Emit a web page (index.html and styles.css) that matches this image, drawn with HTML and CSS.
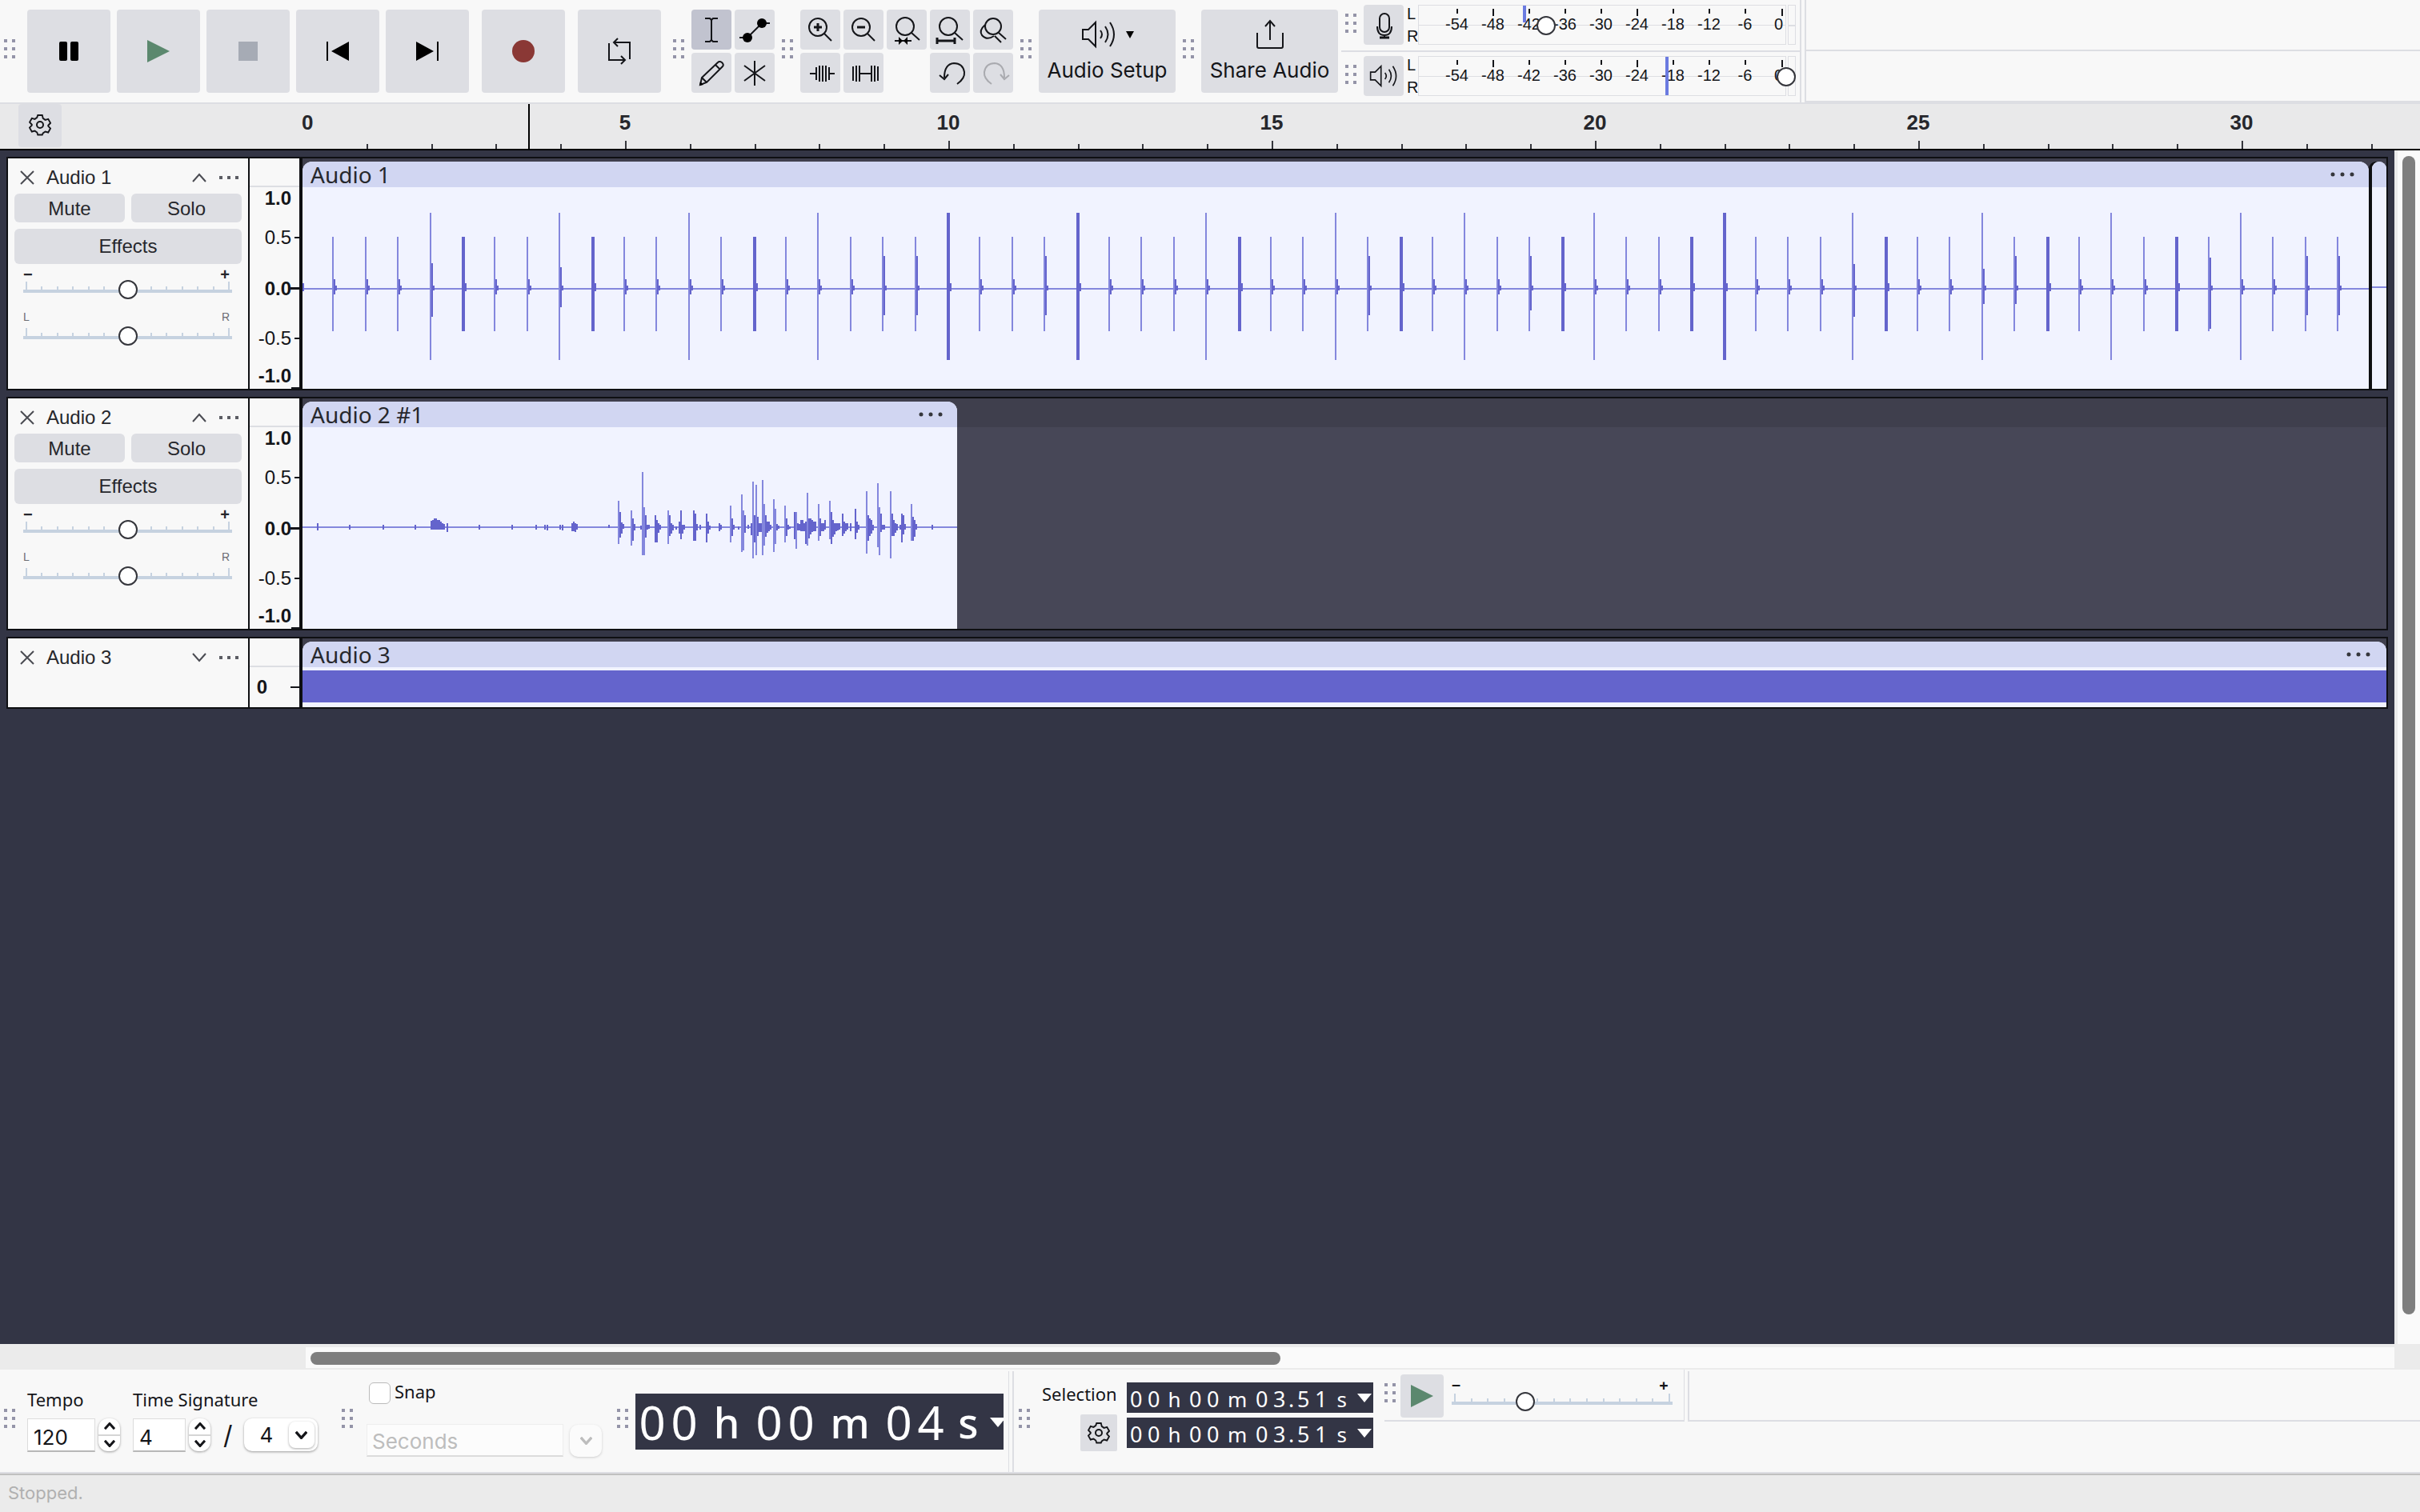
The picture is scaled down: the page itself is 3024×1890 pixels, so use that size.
FILE: index.html
```
<!doctype html>
<html lang="en">
<head>
<meta charset="utf-8">
<meta name="viewport" content="width=device-width,initial-scale=1">
<title>Audio editor</title>
<link rel="stylesheet" href="styles.css">
</head>
<body>

<!-- shared icons -->
<svg class="defs" width="0" height="0" aria-hidden="true">
	<symbol id="grip" viewBox="0 0 14 24"><path d="M0 0h4v4H0zM10 0h4v4h-4zM0 10h4v4H0zM10 10h4v4h-4zM0 20h4v4H0zM10 20h4v4h-4z" fill="#9494a8"/></symbol>
	<symbol id="gear" viewBox="0 0 28 28"><path d="M11 2h6l1 4 3 2 4-1 3 5-3 3v1l3 3-3 5-4-1-3 2-1 2h-6l-1-3-3-2-4 1-3-5 3-3v-1l-3-3 3-5 4 1 3-2z" transform="translate(1 0) scale(.93 .98)"/><circle cx="14" cy="14" r="4"/></symbol>
	<symbol id="speaker" viewBox="0 0 44 36"><path d="M2 12h7L18 3v30L9 24H2zM24 13q4 5 0 10M30 8q7 10 0 20M36 3q10 15 0 30"/></symbol>
	<symbol id="close" viewBox="0 0 18 18"><path d="M1 1l16 16M17 1L1 17"/></symbol>
	<symbol id="up" viewBox="0 0 18 12"><path d="M1 11l8-9 8 9"/></symbol>
	<symbol id="down" viewBox="0 0 18 12"><path d="M1 1l8 9 8-9"/></symbol>
	<symbol id="dots" viewBox="0 0 26 6"><path d="M1 1h4v4H1zM11 1h4v4h-4zM21 1h4v4h-4z"/></symbol>
	<symbol id="clipdots" viewBox="0 0 30 6"><circle cx="3" cy="3" r="2.5"/><circle cx="15" cy="3" r="2.5"/><circle cx="27" cy="3" r="2.5"/></symbol>
</svg>

<header class="topbar">
	<svg class="grip"><use href="#grip"/></svg>
	<div class="transport">
		<button class="btn" aria-label="Pause"><svg viewBox="0 0 40 40"><rect x="8" y="8" width="10" height="24" rx="2"/><rect x="22" y="8" width="10" height="24" rx="2"/></svg></button>
		<button class="btn" aria-label="Play"><svg class="green" viewBox="0 0 40 40"><path d="M6 6l28 14L6 34z"/></svg></button>
		<button class="btn" aria-label="Stop"><svg class="gray" viewBox="0 0 40 40"><path d="M8 8h24v24H8z"/></svg></button>
		<button class="btn" aria-label="Skip to start"><svg viewBox="0 0 40 40"><path d="M6 8h2v24H6zM34 8v24L12 20z"/></svg></button>
		<button class="btn" aria-label="Skip to end"><svg viewBox="0 0 40 40"><path d="M6 8v24l22-12zM32 8h2v24h-2z"/></svg></button>
		<button class="btn spaced" aria-label="Record"><svg class="red" viewBox="0 0 40 40"><circle cx="20" cy="20" r="14"/></svg></button>
		<button class="btn spaced" aria-label="Loop"><svg class="line" viewBox="0 0 40 40"><path d="M7 10v21h20M22 26l5 5-5 5M33 30V9H13M18 4l-5 5 5 5"/></svg></button>
	</div>

	<svg class="grip"><use href="#grip"/></svg>
	<div class="tools tools2">
		<button class="btn active" aria-label="Selection tool"><svg class="line" viewBox="0 0 50 50"><path d="M17 11h6l2 2 2-2h6M17 40h6l2-2 2 2h6M25 12v27"/></svg></button>
		<button class="btn" aria-label="Envelope tool"><svg class="line" viewBox="0 0 50 50"><path d="M6 35h10l18-18h10"/><g class="solid"><circle cx="16" cy="35" r="6"/><circle cx="34" cy="17" r="6"/></g></svg></button>
		<button class="btn" aria-label="Draw tool"><svg class="line" viewBox="0 0 50 50"><path d="M11 40l2-9 20-19q2-2 5 0 3 3 1 5L19 37zM13 31l6 6M30 15l6 6"/><path class="solid" d="M10 41l1-5 4 4z"/></svg></button>
		<button class="btn" aria-label="Multi-tool"><svg class="line" viewBox="0 0 50 50"><path d="M25 10v31M12 16l26 19M38 16L12 35"/></svg></button>
	</div>

	<svg class="grip"><use href="#grip"/></svg>
	<div class="tools tools5">
		<button class="btn" aria-label="Zoom in"><svg class="line" viewBox="0 0 50 50"><circle cx="22" cy="22" r="11"/><path d="M30 30l9 9"/><path class="bold" d="M17 22h10M22 17v10"/></svg></button>
		<button class="btn" aria-label="Zoom out"><svg class="line" viewBox="0 0 50 50"><circle cx="22" cy="22" r="11"/><path d="M30 30l9 9"/><path class="bold" d="M17 22h10"/></svg></button>
		<button class="btn" aria-label="Zoom to selection"><svg class="line" viewBox="0 0 50 50"><circle cx="23" cy="21" r="11"/><path d="M31 29l10 9M10 39h21"/><path class="solid" d="M15 34l5 5-5 5zM26 34l-5 5 5 5z"/></svg></button>
		<button class="btn" aria-label="Fit project"><svg class="line" viewBox="0 0 50 50"><circle cx="23" cy="21" r="11"/><path d="M31 29l10 9"/><path class="bold" d="M9 39h22M9 35v8M31 35v8"/></svg></button>
		<button class="btn" aria-label="Zoom toggle"><svg class="line" viewBox="0 0 50 50"><circle cx="25" cy="21" r="10"/><path d="M32 29l9 8M15 19q-8 7-4 13 6 7 15 1M27 33l8 8"/></svg></button>
		<button class="btn" aria-label="Trim"><svg class="line" viewBox="0 0 50 50"><path d="M12 26h9M35 26h8M20 18v16M24 16v20M28 16v20M32 16v20M36 18v16"/></svg></button>
		<button class="btn" aria-label="Silence"><svg class="line" viewBox="0 0 50 50"><path d="M12 17v18M16 16v20M20 16v20M20 26h15M35 16v20M39 16v20M43 17v18"/></svg></button>
		<span></span>
		<button class="btn" aria-label="Undo"><svg class="line" viewBox="0 0 50 50"><path d="M34 39q10-7 9-15-2-11-13-11-12 1-12 18M12 28l6 5 5-6"/></svg></button>
		<button class="btn" aria-label="Redo" disabled><svg class="line" viewBox="0 0 50 50"><path d="M23 39q-10-7-9-15 2-11 13-11 12 1 12 18M34 27l5 6 6-5"/></svg></button>
	</div>

	<svg class="grip"><use href="#grip"/></svg>
	<button class="btn big">
		<span class="bigicon"><svg class="line" width="44" height="36"><use href="#speaker"/></svg><svg width="10" height="9"><path d="M0 0h10L5 9z"/></svg></span>
		Audio Setup
	</button>

	<svg class="grip"><use href="#grip"/></svg>
	<button class="btn big">
		<span class="bigicon"><svg class="line" width="36" height="38" viewBox="0 0 36 38"><path d="M18 26V3M12 9l6-7 6 7M2 17v17q0 2 2 2h28q2 0 2-2V17"/></svg></span>
		Share Audio
	</button>

	<div class="meters">
		<div class="meterrow">
			<svg class="grip"><use href="#grip"/></svg>
			<button class="btn" aria-label="Record meter"><svg class="line" viewBox="0 0 50 50"><rect x="20" y="11" width="12" height="23" rx="6"/><path d="M17 27q0 11 9 11t9-11M26 38v3"/><path class="bold" d="M20 41h12"/></svg></button>
			<div class="lr"><span>L</span><span>R</span></div>
			<div class="meter">
				<div class="db"><span>-54</span><span class="long">-48</span><span>-42</span><span>-36</span><span>-30</span><span class="long">-24</span><span>-18</span><span>-12</span><span>-6</span><span class="long last">0</span></div>
				<i class="peak half" style="left:131px"></i>
				<div class="clipbox"></div>
				<input class="knob" type="range" aria-label="Recording level" value="33">
			</div>
		</div>
		<div class="meterrow">
			<svg class="grip"><use href="#grip"/></svg>
			<button class="btn" aria-label="Playback meter"><svg class="line" width="36" height="30"><use href="#speaker"/></svg></button>
			<div class="lr"><span>L</span><span>R</span></div>
			<div class="meter">
				<div class="db"><span>-54</span><span class="long">-48</span><span>-42</span><span>-36</span><span>-30</span><span class="long">-24</span><span>-18</span><span>-12</span><span>-6</span><span class="long last">0</span></div>
				<i class="peak" style="left:309px"></i>
				<div class="clipbox"></div>
				<input class="knob" type="range" aria-label="Playback level" value="100">
			</div>
		</div>
	</div>
	<div class="filler"><div></div><div></div></div>
</header>

<div class="timeline">
	<button class="btn gearbtn" aria-label="Timeline options"><svg class="line" width="28" height="28"><use href="#gear"/></svg></button>
	<div class="scale">
		<span>0</span><span>5</span><span>10</span><span>15</span><span>20</span><span>25</span><span>30</span>
		<i class="playhead" style="left:283px"></i>
	</div>
</div>

<main class="workspace">
	<div class="tracks">

		<section class="track">
			<div class="panel">
				<div class="head"><button aria-label="Close track"><svg width="18" height="18"><use href="#close"/></svg></button><b>Audio 1</b><button aria-label="Collapse"><svg width="18" height="12"><use href="#up"/></svg></button><button aria-label="Track menu"><svg class="fill" width="26" height="6"><use href="#dots"/></svg></button></div>
				<div class="pair"><button class="btn">Mute</button><button class="btn">Solo</button></div>
				<button class="btn fx">Effects</button>
				<div class="ends"><span>&minus;</span><span>+</span></div>
				<input class="slider" type="range" aria-label="Gain 1">
				<div class="ends pan"><span>L</span><span>R</span></div>
				<input class="slider" type="range" aria-label="Pan 1">
			</div>
			<div class="vruler"><span class="end">1.0</span><span class="mid">0.5</span><span class="zero">0.0</span><span class="mid">-0.5</span><span class="end low">-1.0</span></div>
			<div class="lane">
				<div class="clip" style="width:2582px"><div class="title">Audio 1<svg class="fill" width="30" height="6"><use href="#clipdots"/></svg></div><svg class="wave" id="wave1"></svg></div>
				<div class="clip rest"><div class="title"></div><svg class="wave"><path class="peaks" d="M0 125h400"/></svg></div>
			</div>
		</section>

		<section class="track">
			<div class="panel">
				<div class="head"><button aria-label="Close track"><svg width="18" height="18"><use href="#close"/></svg></button><b>Audio 2</b><button aria-label="Collapse"><svg width="18" height="12"><use href="#up"/></svg></button><button aria-label="Track menu"><svg class="fill" width="26" height="6"><use href="#dots"/></svg></button></div>
				<div class="pair"><button class="btn">Mute</button><button class="btn">Solo</button></div>
				<button class="btn fx">Effects</button>
				<div class="ends"><span>&minus;</span><span>+</span></div>
				<input class="slider" type="range" aria-label="Gain 2">
				<div class="ends pan"><span>L</span><span>R</span></div>
				<input class="slider" type="range" aria-label="Pan 2">
			</div>
			<div class="vruler"><span class="end">1.0</span><span class="mid">0.5</span><span class="zero">0.0</span><span class="mid">-0.5</span><span class="end low">-1.0</span></div>
			<div class="lane">
				<div class="clip" style="width:818px"><div class="title">Audio 2 #1<svg class="fill" width="30" height="6"><use href="#clipdots"/></svg></div><svg class="wave" id="wave2"></svg></div>
			</div>
		</section>

		<section class="track small">
			<div class="panel">
				<div class="head"><button aria-label="Close track"><svg width="18" height="18"><use href="#close"/></svg></button><b>Audio 3</b><button aria-label="Expand"><svg width="18" height="12"><use href="#down"/></svg></button><button aria-label="Track menu"><svg class="fill" width="26" height="6"><use href="#dots"/></svg></button></div>
			</div>
			<div class="vruler"><span class="only">0</span></div>
			<div class="lane">
				<div class="clip rest"><div class="title">Audio 3<svg class="fill" width="30" height="6"><use href="#clipdots"/></svg></div><div class="block"></div></div>
			</div>
		</section>

	</div>
	<div class="vscroll"><div></div></div>
</main>

<div class="hscroll"><div class="hbox"><div class="hbar"></div></div></div>

<footer class="bottombar">
	<svg class="grip"><use href="#grip"/></svg>
	<div class="field tempo">
		<label for="tempo">Tempo</label>
		<div class="row"><input id="tempo" class="text" value="120"><div class="spin"><button aria-label="Tempo up"><svg width="14" height="9"><use href="#up"/></svg></button><button aria-label="Tempo down"><svg width="14" height="9"><use href="#down"/></svg></button></div></div>
	</div>
	<div class="field sig">
		<label for="beats">Time Signature</label>
		<div class="row"><input id="beats" class="text" value="4"><div class="spin"><button aria-label="Beats up"><svg width="14" height="9"><use href="#up"/></svg></button><button aria-label="Beats down"><svg width="14" height="9"><use href="#down"/></svg></button></div><span class="slash">/</span><div class="choice"><select aria-label="Beat unit"><option>4</option></select><span class="arrow"><svg width="15" height="10"><use href="#down"/></svg></span></div></div>
	</div>

	<svg class="grip"><use href="#grip"/></svg>
	<div class="field snap">
		<label><input type="checkbox"><span>Snap</span></label>
		<div class="row"><select aria-label="Snap to" disabled><option>Seconds</option></select><span class="arrow"><svg width="15" height="10"><use href="#down"/></svg></span></div>
	</div>

	<svg class="grip"><use href="#grip"/></svg>
	<div class="bigtime"><span>0</span><span>0</span><em>h</em><span>0</span><span>0</span><em class="m">m</em><span>0</span><span>4</span><em class="s">s</em><button aria-label="Time format"><svg width="20" height="12"><path d="M0 0h20L10 12z"/></svg></button></div>

	<div class="divider"></div>
	<svg class="grip"><use href="#grip"/></svg>
	<div class="selection">
		<div class="sellabel"><span>Selection</span><button class="btn" aria-label="Selection options"><svg class="line" width="28" height="28"><use href="#gear"/></svg></button></div>
		<div class="times">
			<div class="time"><span>0</span><span>0</span><em>h</em><span>0</span><span>0</span><em class="m">m</em><span>0</span><span>3</span><i>.</i><span>5</span><span>1</span><em>s</em><button aria-label="Start format"><svg width="18" height="11"><path d="M0 0h18L9 11z"/></svg></button></div>
			<div class="time"><span>0</span><span>0</span><em>h</em><span>0</span><span>0</span><em class="m">m</em><span>0</span><span>3</span><i>.</i><span>5</span><span>1</span><em>s</em><button aria-label="End format"><svg width="18" height="11"><path d="M0 0h18L9 11z"/></svg></button></div>
		</div>
	</div>

	<div class="speed">
		<svg class="grip"><use href="#grip"/></svg>
		<button class="btn" aria-label="Play at speed"><svg class="green" viewBox="0 0 40 40"><path d="M6 6l28 14L6 34z"/></svg></button>
		<div class="speedbox"><div class="ends"><span>&minus;</span><span>+</span></div><input class="slider" type="range" value="32" aria-label="Playback speed"></div>
	</div>
	<div class="filler"><div></div></div>
</footer>

<div class="status">Stopped.</div>

<script>

	// each bar is [ x, up, down ] around the middle of the clip
	function draw( id, mid, width, light, dark ) {

		const path = list => list.map( b => 'M' + b[ 0 ] + ' ' + ( mid - b[ 1 ] ) + 'V' + ( mid + b[ 2 ] ) ).join( '' );

		document.getElementById( id ).innerHTML =
			'<path class="peaks" d="M0 ' + mid + 'h' + width + path( light ) + '"/><path class="body" d="' + path( dark ) + '"/>';

	}

	// click track: a beat every half second, accent every fourth
	const thick = [ 5, 9, 14, 20, 24, 29, 34, 39, 43, 44, 49, 54, 58 ];
	const tails = { 4: [ 32, 35 ], 8: [ 27, 23 ], 18: [ 41, 33 ], 19: [ 41, 33 ], 23: [ 41, 33 ], 33: [ 41, 33 ], 38: [ 41, 27 ],
		48: [ 31, 35 ], 52: [ 25, 19 ], 53: [ 41, 19 ], 59: [ 39, 50 ], 62: [ 41, 33 ], 63: [ 41, 33 ] };
	const light = [];
	const dark = [ [ 1, 7, 3 ] ];

	for ( let i = 1; i < 64; i++ ) {

		const x = Math.round( i * 40.4 - 2 );
		const accent = i % 4 === 0;
		const up = accent ? 95 : 65;
		const dn = accent ? 89 : 53;
		const tail = tails[ i ] || [ 12, 7 ];

		light.push( [ x, up, dn ] );

		if ( thick.includes( i ) ) {

			dark.push( [ x, up, dn ], [ x + 2, up, dn ], [ x + 4, 7, 3 ] );

		} else {

			dark.push( [ x + 2, tail[ 0 ], tail[ 1 ] ], [ x + 4, 4, 2 ] );

		}

	}

	draw( 'wave1', 127, 2582, light, dark );

	// recorded taps
	const taps = [ [ 19, 5, 4 ], [ 59, 3, 3 ], [ 101, 3, 3 ], [ 141, 3, 3 ],
		[ 161, 8, 3 ], [ 163, 9, 3 ], [ 165, 11, 3 ], [ 167, 11, 3 ], [ 169, 9, 3 ], [ 171, 9, 3 ], [ 173, 7, 3 ], [ 175, 5, 3 ], [ 177, 4, 3 ], [ 181, 5, 6 ],
		[ 221, 3, 3 ], [ 262, 3, 3 ], [ 292, 3, 3 ], [ 303, 3, 3 ], [ 306, 3, 4 ], [ 322, 3, 3 ], [ 325, 3, 4 ], [ 337, 5, 5 ], [ 339, 7, 5 ], [ 341, 5, 6 ], [ 343, 4, 3 ], [ 383, 3, 1 ],
		[ 395, 33, 21 ], [ 397, 19, 13 ], [ 399, 6, 8 ], [ 401, 4, 2 ], [ 411, 21, 23 ], [ 413, 11, 17 ], [ 415, 4, 4 ],
		[ 423, 2, 3 ], [ 425, 69, 35 ], [ 427, 25, 35 ], [ 429, 15, 13 ], [ 431, 3, 3 ], [ 433, 3, 2 ],
		[ 441, 15, 19 ], [ 443, 9, 19 ], [ 445, 5, 7 ], [ 447, 3, 3 ], [ 457, 21, 21 ], [ 459, 15, 11 ], [ 461, 5, 8 ], [ 463, 3, 4 ], [ 467, 1, 3 ],
		[ 471, 7, 8 ], [ 473, 21, 15 ], [ 475, 3, 8 ], [ 477, 3, 3 ], [ 489, 21, 17 ], [ 491, 17, 17 ], [ 493, 4, 4 ], [ 497, 3, 3 ],
		[ 505, 17, 19 ], [ 507, 7, 8 ], [ 509, 2, 3 ], [ 521, 5, 5 ], [ 523, 3, 3 ], [ 535, 27, 19 ], [ 537, 11, 11 ], [ 539, 3, 3 ], [ 545, 1, 3 ],
		[ 549, 41, 31 ], [ 551, 21, 29 ], [ 553, 15, 7 ], [ 557, 3, 2 ], [ 561, 5, 10 ], [ 563, 57, 39 ], [ 565, 15, 19 ], [ 567, 53, 35 ], [ 569, 13, 11 ],
		[ 571, 5, 6 ], [ 573, 5, 6 ], [ 575, 59, 35 ], [ 577, 29, 23 ], [ 579, 15, 12 ], [ 581, 7, 7 ], [ 583, 7, 5 ], [ 585, 3, 3 ],
		[ 589, 35, 31 ], [ 591, 23, 21 ], [ 593, 4, 4 ], [ 595, 2, 2 ], [ 603, 27, 19 ], [ 605, 11, 11 ], [ 607, 3, 3 ], [ 609, 1, 2 ],
		[ 615, 19, 15 ], [ 617, 19, 27 ], [ 619, 5, 4 ], [ 621, 4, 4 ], [ 623, 9, 5 ], [ 625, 9, 5 ], [ 627, 5, 5 ], [ 629, 7, 21 ], [ 631, 43, 23 ],
		[ 633, 11, 14 ], [ 635, 11, 9 ], [ 637, 9, 6 ], [ 639, 7, 5 ], [ 641, 7, 5 ], [ 645, 29, 17 ], [ 647, 11, 11 ], [ 649, 5, 5 ], [ 651, 5, 5 ], [ 653, 9, 3 ],
		[ 659, 33, 15 ], [ 661, 19, 21 ], [ 663, 9, 12 ], [ 665, 5, 9 ], [ 667, 5, 5 ], [ 669, 5, 4 ], [ 671, 5, 3 ], [ 675, 17, 11 ], [ 677, 7, 8 ], [ 679, 5, 5 ], [ 681, 5, 3 ], [ 685, 5, 5 ],
		[ 691, 23, 15 ], [ 693, 7, 7 ], [ 695, 3, 3 ], [ 705, 45, 33 ], [ 707, 15, 17 ], [ 709, 11, 11 ], [ 711, 9, 8 ], [ 713, 3, 4 ],
		[ 719, 55, 25 ], [ 721, 25, 35 ], [ 723, 17, 6 ], [ 725, 3, 3 ], [ 727, 3, 3 ], [ 735, 45, 39 ], [ 737, 17, 11 ], [ 739, 9, 11 ], [ 741, 5, 7 ], [ 743, 4, 4 ],
		[ 747, 3, 3 ], [ 749, 17, 19 ], [ 751, 15, 9 ], [ 753, 4, 3 ], [ 761, 29, 17 ], [ 763, 13, 17 ], [ 765, 9, 12 ], [ 767, 4, 3 ], [ 787, 3, 3 ] ];

	const isPeak = b => b[ 1 ] + b[ 2 ] > 40;

	draw( 'wave2', 125, 818, taps.filter( isPeak ), taps.filter( b => !isPeak( b ) ) );

</script>
</body>
</html>
```
FILE: styles.css
```
* { box-sizing: border-box; }

html, body { height: 100%; margin: 0; }

body { background: #f8f8f8; color: #141519; display: flex; flex-direction: column; font: 24px/28px "Liberation Sans", Arial, sans-serif; overflow: hidden; }

button, input, select { color: inherit; font: inherit; margin: 0; padding: 0; }
button { background: none; border: none; }
i, em { font-style: normal; }
svg { display: block; flex: none; }

.defs { position: absolute; }
.btn { align-items: center; background: #dddee3; border-radius: 4px; display: flex; flex: none; justify-content: center; }
.btn.active { background: #c1c3cf; }
.btn:disabled svg { opacity: .25; }

.line, .head svg, .spin svg, .arrow svg { fill: none; stroke: #141519; stroke-width: 2; }
.bold { stroke-width: 3; }
.solid { fill: #000; stroke: none; }
.green { fill: #5b886e; }
.gray { fill: #a6abb5; }
.red { fill: #8a3835; }
.fill { fill: #35363c; }
.head .fill { fill: #5c5d64; stroke: none; }

.grip { height: 24px; width: 14px; }

/* top toolbar */

.topbar { align-items: flex-start; border-bottom: 2px solid #dddee3; display: flex; flex: none; gap: 9px; height: 130px; padding: 12px 0 0 5px; }
.topbar > .grip { margin-top: 37px; }
.transport { display: flex; gap: 8px; margin: 0 6px; }
.transport .btn { height: 104px; width: 104px; }
.transport svg { height: 40px; width: 40px; }
.spaced { margin-left: 8px; }

.tools { display: grid; gap: 4px; }
.tools2 { grid-template-columns: repeat(2, 50px); }
.tools5 { grid-template-columns: repeat(5, 50px); }
.tools .btn, .meterrow .btn { height: 50px; width: 50px; }

.big { flex-direction: column; font: 26px/32px Inter, sans-serif; gap: 10px; height: 104px; width: 171px; }
.bigicon { align-items: center; display: flex; gap: 12px; height: 38px; }

.meters { border-right: 2px solid #dddee3; margin: -12px 0 0 -5px; width: 575px; }
.meterrow { align-items: flex-start; border-bottom: 2px solid #dddee3; display: flex; height: 65px; padding: 6px 5px 0; }
.meterrow + .meterrow { border-bottom: none; height: 63px; padding-top: 5px; }
.meterrow .grip { margin: 11px 9px 0 0; }
.lr { display: flex; flex-direction: column; font-size: 20px; line-height: 28px; margin: -3px 0 0 4px; width: 14px; }
.meter { display: flex; flex: 1; gap: 2px; height: 50px; overflow: hidden; position: relative; }
.db { background: linear-gradient(#dddee3, #dddee3) 0 24px / 100% 1px no-repeat; border: 1px solid #dddee3; display: grid; flex: 1; font-size: 20px; grid-template-columns: repeat(9, 45px) 1fr; line-height: 20px; padding-left: 25px; }
.db span { text-align: center; }
.db span::before { background: #141519; content: ""; display: block; height: 6px; margin: 4px auto 3px; width: 2px; }
.db .long::before { height: 9px; margin-bottom: 0; }
.db .last { padding-right: 3px; text-align: right; }
.db .last::before { margin-right: 0; }
.clipbox { background: linear-gradient(#dddee3, #dddee3) 0 24px / 100% 2px no-repeat; border: 1px solid #dddee3; width: 10px; }
.peak { background: #6b7be0; height: 48px; position: absolute; top: 1px; width: 4px; }
.half { height: 21px; }
.knob, .slider { appearance: none; background: none; height: 24px; }
.knob { left: 0; position: absolute; top: 14px; width: 100%; }
::-webkit-slider-thumb { appearance: none; background: #fff; border: 2px solid #35363c; border-radius: 50%; height: 24px; width: 24px; }

.filler { border-left: 2px solid #dddee3; display: flex; flex: 1; flex-direction: column; margin: -12px 0 0 -5px; }
.filler div { border-bottom: 2px solid #dddee3; height: 64px; }

/* timeline */

.timeline { background: #e9e9ea; border-bottom: 2px solid #000; display: flex; flex: none; height: 58px; }
.gearbtn { height: 54px; margin: 0 300px 0 23px; padding-bottom: 2px; width: 54px; }
.scale { background: repeating-linear-gradient(90deg, #35363c 0 2px, transparent 2px 404px) 0 46px / 100% 10px no-repeat,
	repeating-linear-gradient(90deg, #35363c 0 2px, transparent 2px 20%) 0 50px / 404px 6px repeat-x;
	display: flex; flex: 1; font-size: 26px; font-weight: bold; line-height: 46px; overflow: hidden; position: relative; }
.scale span { color: #26272c; flex: none; text-align: center; width: 404px; }
.scale span:first-child { background: #e9e9ea; margin-right: 188px; text-align: left; width: 14px; }
.playhead { background: #000; height: 56px; position: absolute; top: 0; width: 2px; }

/* tracks */

.workspace { background: #333545; display: flex; flex: 1; min-height: 0; }
.tracks { display: flex; flex: 1; flex-direction: column; gap: 8px; min-width: 0; padding: 8px 8px 0; }
.track { border: 2px solid #0e0f12; display: flex; flex: none; height: 292px; }
.small { height: 90px; }
.panel { background: #f8f8f8; border-right: 2px solid #0e0f12; color: #26272c; display: flex; flex: none; flex-direction: column; padding: 8px 8px 0; width: 302px; }
.head { align-items: center; display: flex; gap: 15px; height: 32px; padding: 0 3px 0 7px; }
.head b { flex: 1; font-weight: normal; }
.head svg { stroke: #4a4b52; }
.pair { display: grid; gap: 8px; grid-template-columns: 1fr 1fr; margin: 4px 0 8px; }
.pair .btn { border-radius: 6px; height: 36px; padding-top: 2px; }
.fx { border-radius: 6px; height: 44px; }
.ends { display: flex; font-size: 20px; font-weight: bold; justify-content: space-between; line-height: 20px; padding: 3px 15px 0 11px; }
.pan { color: #6b6c72; font-size: 14px; font-weight: normal; padding-bottom: 5px; padding-top: 12px; }
.slider { background: linear-gradient(#c6d2e0, #c6d2e0) 0 12px / 100% 4px no-repeat,
	repeating-linear-gradient(90deg, #c6d2e0 0 2px, transparent 2px calc((100% - 2px) / 13)) 3px 8px / calc(100% - 6px) 4px no-repeat,
	linear-gradient(#c6d2e0, #c6d2e0) 3px 2px / 2px 10px no-repeat,
	linear-gradient(#c6d2e0, #c6d2e0) calc(100% - 3px) 2px / 2px 10px no-repeat;
	margin: -3px 12px 0 11px; }

.vruler { background: linear-gradient(#dddee3, #dddee3) 0 34px / 100% 2px no-repeat #f8f8f8; border-right: 4px solid #0e0f12; display: flex; flex: none; flex-direction: column; padding-top: 36px; text-align: right; width: 66px; }
.vruler span { padding-right: 10px; }
.vruler .end, .vruler .zero, .vruler .only { font-weight: bold; }
.vruler .mid { background: linear-gradient(#141519, #141519) 100% 13px / 6px 2px no-repeat; margin-top: 21px; }
.vruler .zero { background: linear-gradient(#141519, #141519) 100% 12px / 11px 3px no-repeat; margin-top: 36px; }
.vruler .zero + .mid { margin-top: 34px; }
.vruler .low { border-bottom: 2px solid #141519; border-image: linear-gradient(90deg, transparent 82%, #141519 82%) 1; margin-top: auto; }
.vruler .only { background: linear-gradient(#141519, #141519) 100% 13px / 11px 2px no-repeat; margin: auto 0; padding: 0 40px 0 0; }

.lane { background: linear-gradient(#3f3f4d 36px, #474757 36px); display: flex; flex: 1; min-width: 0; padding-top: 4px; }
.clip { background: #f1f3ff; border-radius: 12px 12px 0 0; display: flex; flex: none; flex-direction: column; }
.clip + .clip { box-shadow: -4px 0 #0e0f12; margin-left: 4px; }
.rest { flex: 1; min-width: 0; }
.title { align-items: center; background: #d1d6f2; border-radius: 12px 12px 0 0; color: #26272c; display: flex; font: 28px/32px "Noto Sans", sans-serif; height: 32px; justify-content: space-between; padding: 0 18px 0 10px; }
.rest + .rest .title, .clip + .clip .title { padding: 0; }
.small .title { padding-right: 20px; }
.wave { flex: 1; min-height: 0; overflow: hidden; width: 100%; }
.peaks { fill: none; stroke: #8487dd; stroke-width: 2; }
.body { fill: none; stroke: #6464cc; stroke-width: 2; }
.block { background: #6464cc; height: 40px; margin-top: 4px; }

.vscroll { background: #fafafa; border-left: 4px solid #ebebeb; padding: 7px 6px 0 6px; width: 32px; }
.vscroll div { background: #7e7e7e; border-radius: 8px; height: calc(100% - 37px); width: 16px; }

.hscroll { background: #ebebeb; display: flex; flex: none; height: 32px; padding: 0 32px 0 382px; }
.hbox { background: #fafafa; border-bottom: 2px solid #ebebeb; border-top: 4px solid #ebebeb; flex: 1; padding: 6px; }
.hbar { background: #7e7e7e; border-radius: 8px; height: 16px; width: calc(47% - 9px); }

/* bottom toolbar */

.bottombar { align-items: flex-start; border-bottom: 2px solid #dddee3; display: flex; flex: none; font: 22px/30px "Noto Sans", sans-serif; height: 130px; padding-left: 5px; }
.bottombar > .grip { margin: 49px 15px 0 0; }
.field { display: flex; flex-direction: column; }
.row { align-items: center; display: flex; font: 26px/32px Inter, sans-serif; height: 41px; margin-top: 9px; }
.tempo, .sig { padding-top: 22px; }
.tempo { width: 132px; }
.sig { width: 261px; }
.text { background: #fff; border: 1px solid #dcdcdc; border-bottom: 2px solid #b8b8b8; height: 42px; margin-right: 4px; padding: 6px 0 0 7px; width: 85px; }
.sig .text { width: 66px; }
.spin { background: #fff; border-radius: 12px; box-shadow: 0 1px 3px #999; display: grid; height: 41px; overflow: hidden; width: 27px; }
.spin button { display: grid; place-items: center; }
.spin button + button { border-top: 2px solid #d5d5d5; }
.spin svg, .arrow svg { stroke-width: 4; }
.slash { font-size: 32px; margin: 0 14px 0 16px; }
.choice { align-items: center; background: #fff; border-radius: 10px; box-shadow: 0 1px 3px #999; display: flex; height: 41px; justify-content: space-between; padding: 0 4px 0 0; width: 92px; }
.choice select, .snap select { appearance: none; background: none; border: none; flex: 1; height: 41px; padding-left: 20px; }
.arrow { background: #fff; border-radius: 8px; box-shadow: 0 1px 3px #aaa; display: grid; height: 33px; place-items: center; width: 32px; }

.snap { padding: 16px 0 0 2px; width: 315px; }
.snap label { align-items: center; display: flex; gap: 5px; height: 27px; line-height: 24px; margin-left: 3px; }
.snap label span { padding-bottom: 5px; }
.snap input { appearance: none; background: #fff; border: 1px solid #bbb; border-radius: 6px; height: 27px; width: 27px; }
.snap .row { color: #bdbdbd; gap: 8px; margin-top: 25px; }
.snap select { background: #fcfcfc; border: 1px solid #eee; border-bottom: 2px solid #dcdcdc; flex: none; opacity: 1; padding: 4px 0 0 6px; width: 246px; }
.snap .arrow { background: #fbfbfb; border-radius: 10px; box-shadow: 0 1px 3px #ccc; height: 40px; width: 40px; }
.snap .arrow svg { stroke: #bdbdbd; }

.bigtime, .time { background: #333545; color: #fff; display: flex; flex: none; }
.bigtime { font-size: 58px; height: 70px; line-height: 72px; margin: 30px 6px 0 -6px; padding-left: 1px; width: 460px; }
.bigtime span, .time span, .bigtime em, .time em { flex: none; text-align: center; width: 40px; }
.bigtime em { font-size: 52px; font-weight: 500; width: 66px; }
.bigtime .m { width: 82px; }
.bigtime .s { width: 54px; }
.bigtime button { align-self: flex-start; flex: 1; min-width: 0; overflow: hidden; padding-top: 30px; }
.bigtime svg, .time svg { fill: #fff; }
.divider { align-self: stretch; border: solid #dddee3; border-width: 0 2px 0 1px; margin: 2px 6px 0 0; width: 7px; }
.selection { display: flex; gap: 12px; padding: 16px 14px 0 0; }
.sellabel { align-items: flex-end; display: flex; flex-direction: column; gap: 12px; line-height: 28px; }
.sellabel .btn { border-radius: 2px; height: 46px; width: 46px; }
.times { display: grid; gap: 2px; }
.time { font-size: 27px; height: 38px; line-height: 42px; padding-left: 1px; width: 308px; }
.time span { width: 22px; }
.time em { font-size: 26px; width: 30px; }
.time .m { width: 39px; }
.time i { text-align: center; width: 8px; }
.time button { align-self: flex-start; padding: 14px 0 0 4px; }

.speed { align-items: flex-start; border: solid #dddee3; border-width: 0 1px 2px 0; display: flex; height: 65px; padding-top: 6px; }
.speed .grip { margin: 11px 6px 0 0; }
.speed .btn { height: 54px; width: 54px; }
.speed .btn svg { height: 40px; width: 40px; }
.speedbox { padding: 2px 14px 0 10px; width: 300px; }
.speedbox .ends { padding: 2px 5px 0 0; }
.speedbox .slider { display: block; margin: -2px 0 0; width: 100%; }
.bottombar .filler { margin: 2px 0 0 4px; }
.bottombar .filler div { height: 63px; }

.status { background: #ebebeb; border-top: 2px solid #c0c0c0; color: #b0b0b0; flex: none; font: 22px/44px Inter, sans-serif; height: 48px; padding-left: 10px; }
```
